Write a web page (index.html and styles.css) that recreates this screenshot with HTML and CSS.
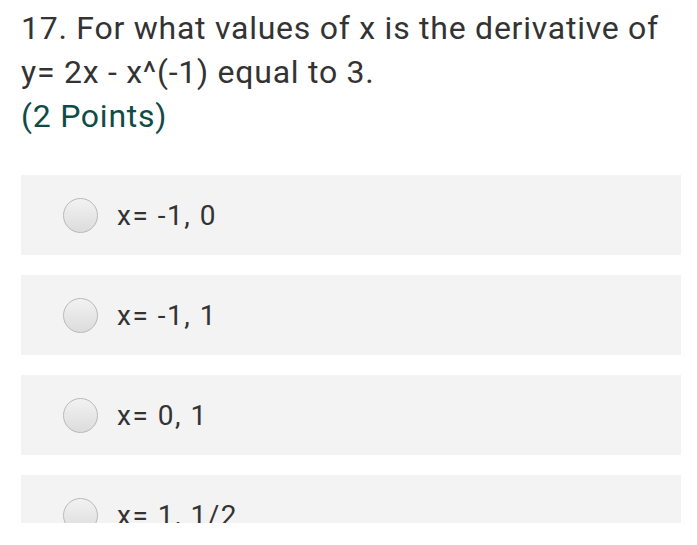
FILE: index.html
```html
<!DOCTYPE html>
<html>
<head>
<meta charset="utf-8">
<link rel="stylesheet" href="styles.css">
</head>
<body>
<div class="page">
  <div class="question">
    <div class="title">17. For what values of x is the derivative of y= 2x - x^(-1) equal to 3.</div>
    <div class="points">(2 Points)</div>
  </div>
  <div class="options">
    <label class="option"><span class="radio"></span><span class="label">x= -1, 0</span></label>
    <label class="option"><span class="radio"></span><span class="label">x= -1, 1</span></label>
    <label class="option"><span class="radio"></span><span class="label">x= 0, 1</span></label>
    <label class="option"><span class="radio"></span><span class="label">x= 1, 1/2</span></label>
  </div>
</div>
</body>
</html>
```
FILE: styles.css
```css
html, body {
  margin: 0;
  padding: 0;
  background: #ffffff;
}
.page {
  height: 523px;
  overflow: hidden;
  padding: 6px 16px 0 21px;
  box-sizing: border-box;
  font-family: Roboto, "Noto Sans", sans-serif;
}
.question {
  font-size: 32px;
  line-height: 44px;
  letter-spacing: 0.75px;
  color: #333333;
}
.points {
  color: #0f4c47;
}
.options {
  margin-top: 37px;
  display: flex;
  flex-direction: column;
  gap: 20px;
}
.option {
  display: flex;
  align-items: center;
  height: 80px;
  flex-shrink: 0;
  background: #f3f3f3;
  padding-left: 42px;
}
.radio {
  width: 33px;
  height: 33px;
  border-radius: 50%;
  border: 1px solid #b9b9b9;
  background: linear-gradient(#f2f2f2, #dcdcdc);
  flex-shrink: 0;
}
.label {
  margin-left: 19px;
  font-size: 28px;
  letter-spacing: 1.5px;
  color: #333333;
}
```
